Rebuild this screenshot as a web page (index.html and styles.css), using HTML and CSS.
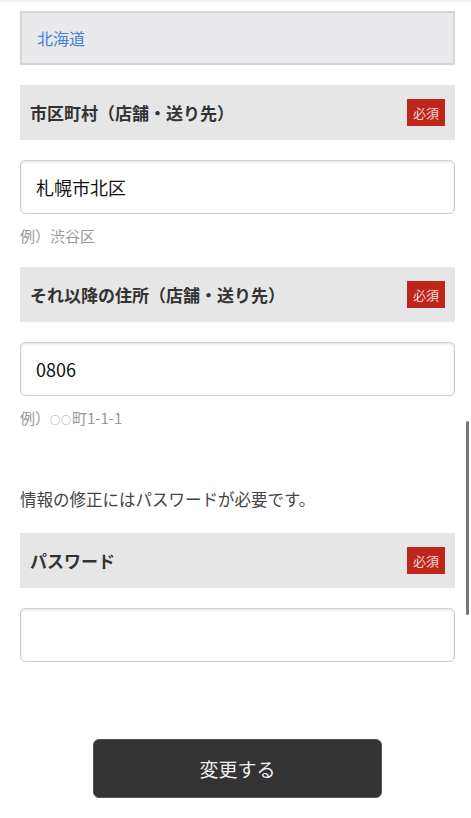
FILE: index.html
```html
<!DOCTYPE html>
<html lang="ja">
<head>
    <meta charset="UTF-8">
    <meta name="viewport" content="width=device-width, initial-scale=1.0">
    <title>登録情報の変更</title>
    <link rel="stylesheet" href="styles.css">
</head>
<body>
    <div class="top-line"></div>
    <form class="form">
        <div class="select-box">北海道</div>

        <div class="field-head">
            <span>市区町村（店舗・送り先）</span>
            <span class="required">必須</span>
        </div>
        <div class="text-box">札幌市北区</div>
        <p class="hint">例）渋谷区</p>

        <div class="field-head">
            <span>それ以降の住所（店舗・送り先）</span>
            <span class="required">必須</span>
        </div>
        <div class="text-box">0806</div>
        <p class="hint">例）<span class="mark">○○</span>町1-1-1</p>

        <p class="note">情報の修正にはパスワードが必要です。</p>

        <div class="field-head">
            <span>パスワード</span>
            <span class="required">必須</span>
        </div>
        <div class="text-box"></div>

        <div class="actions">
            <button type="button" class="submit">変更する</button>
        </div>
    </form>
    <div class="scroll-bar"></div>
</body>
</html>
```

FILE: styles.css
```css
body {
    margin: 0;
    font-family: "Noto Sans CJK JP", "Noto Sans", sans-serif;
    background: #fff;
    color: #333;
    position: relative;
    height: 818px;
    overflow: hidden;
}
.top-line {
    height: 2px;
    background: #f1f1f1;
}
.form {
    padding: 9px 16px 0 20px;
    display: flex;
    flex-direction: column;
}
.select-box {
    height: 54px;
    box-sizing: border-box;
    background: #e9e9eb;
    border: 2px solid #d4d4d6;
    padding-left: 15px;
    display: flex;
    align-items: center;
    font-size: 16px;
    color: #3f80d8;
}
.field-head {
    margin-top: 20px;
    height: 55px;
    background: #e6e6e6;
    display: flex;
    align-items: center;
    justify-content: space-between;
    padding: 0 10px;
    font-size: 17px;
    font-weight: bold;
    color: #333;
}
.required {
    width: 38px;
    height: 27px;
    background: #c0251c;
    color: #f4dcdb;
    font-size: 13px;
    font-weight: normal;
    display: flex;
    align-items: center;
    justify-content: center;
}
.text-box {
    margin-top: 20px;
    height: 54px;
    box-sizing: border-box;
    border: 1px solid #cfcfcf;
    border-radius: 5px;
    box-shadow: inset 0 1px 3px rgba(0,0,0,0.12);
    padding-left: 15px;
    display: flex;
    align-items: center;
    font-size: 18px;
    color: #111;
}
.hint {
    margin: 12px 0 1px;
    font-size: 15px;
    line-height: 20px;
    height: 20px;
    color: #999;
}
.mark {
    font-size: 10px;
    letter-spacing: 1px;
}
.note {
    margin: 58px 0 2px;
    font-size: 16.5px;
    line-height: 24px;
    color: #444;
}
.actions {
    margin-top: 77px;
    display: flex;
    padding-left: 73px;
}
.submit {
    width: 289px;
    height: 59px;
    background: #333;
    border: 1px solid #555;
    border-radius: 6px;
    color: #eee;
    font-family: "Noto Sans CJK JP", sans-serif;
    font-size: 19px;
    cursor: pointer;
}
.scroll-bar {
    position: absolute;
    right: 2px;
    top: 421px;
    width: 3px;
    height: 194px;
    border-radius: 2px;
    background: #777;
}
```
